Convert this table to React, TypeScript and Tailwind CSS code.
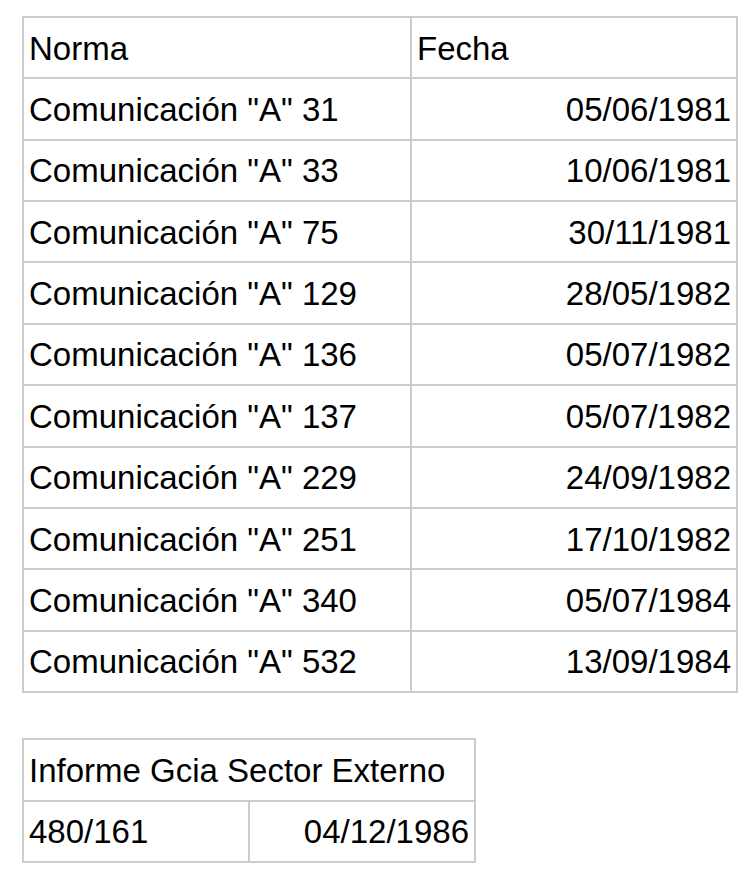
const rows: [string, string][] = [
  ['Comunicación "A" 31', '05/06/1981'],
  ['Comunicación "A" 33', '10/06/1981'],
  ['Comunicación "A" 75', '30/11/1981'],
  ['Comunicación "A" 129', '28/05/1982'],
  ['Comunicación "A" 136', '05/07/1982'],
  ['Comunicación "A" 137', '05/07/1982'],
  ['Comunicación "A" 229', '24/09/1982'],
  ['Comunicación "A" 251', '17/10/1982'],
  ['Comunicación "A" 340', '05/07/1984'],
  ['Comunicación "A" 532', '13/09/1984'],
]

const cell = 'flex items-center border-r-2 border-b-2 border-[#cccccc] px-[5px] pt-[1px] whitespace-nowrap'

export default function App() {
  return (
    <div
      className="min-h-[882px] bg-white pl-[22px] pt-[16px] text-[33px] leading-none text-black"
      style={{ fontFamily: '"Liberation Sans", Arial, sans-serif' }}
    >
      <div className="grid w-[716px] grid-cols-[388px_326px] border-t-2 border-l-2 border-[#cccccc]">
        <div className={`${cell} h-[61.36px]`}>Norma</div>
        <div className={`${cell} h-[61.36px]`}>Fecha</div>
        {rows.map(([norma, fecha], i) => (
          <div key={i} className="contents">
            <div className={`${cell} h-[61.36px]`}>{norma}</div>
            <div className={`${cell} h-[61.36px] justify-end`}>{fecha}</div>
          </div>
        ))}
      </div>

      <div className="mt-[45px] grid w-[454px] grid-cols-[226px_226px] border-t-2 border-l-2 border-[#cccccc]">
        <div className={`${cell} col-span-2 h-[62px]`}>Informe Gcia Sector Externo</div>
        <div className={`${cell} h-[61px]`}>480/161</div>
        <div className={`${cell} h-[61px] justify-end`}>04/12/1986</div>
      </div>
    </div>
  )
}
